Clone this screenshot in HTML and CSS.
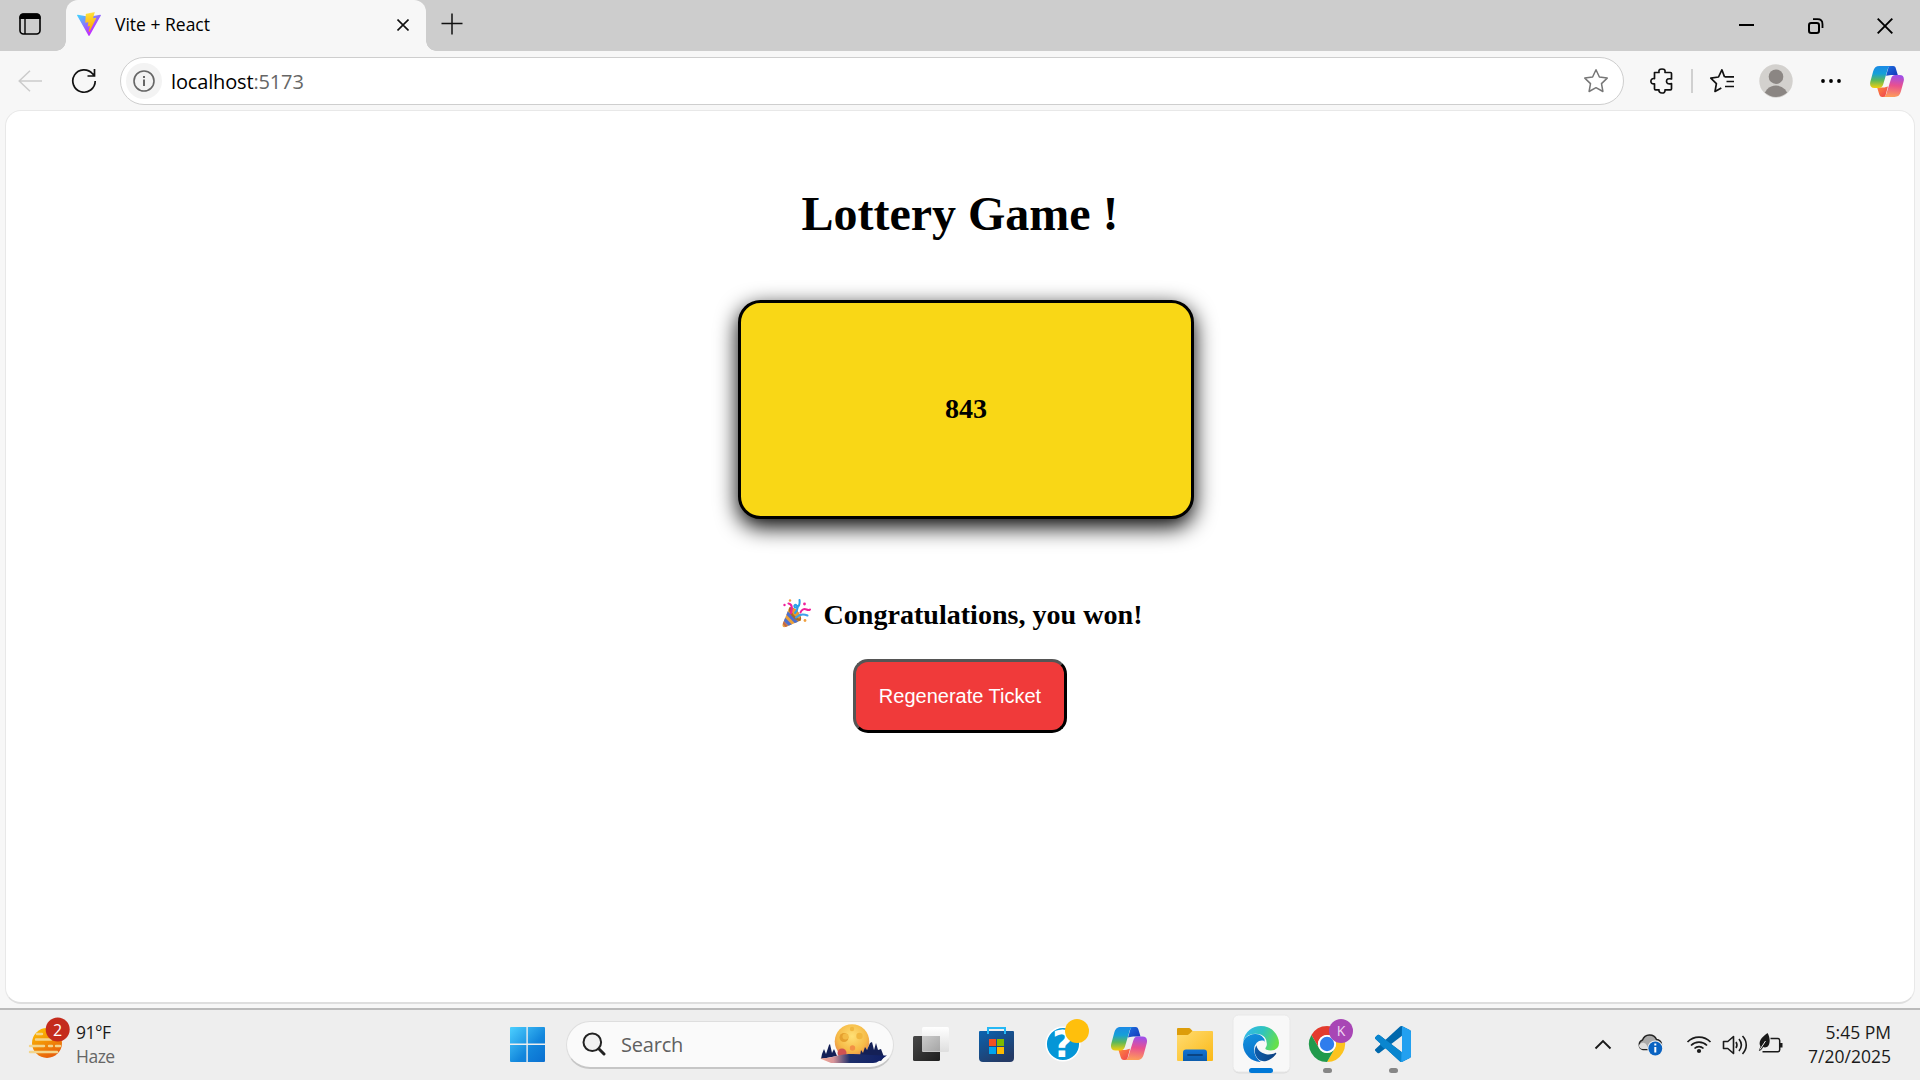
FILE: index.html
```html
<!DOCTYPE html>
<html lang="en">
<head>
<meta charset="utf-8">
<title>Vite + React</title>
<link rel="stylesheet" href="styles.css">
</head>
<body>
<svg class="defs" width="0" height="0" aria-hidden="true">
  <defs>
    <linearGradient id="cpA" x1="0" y1="0" x2="0" y2="1"><stop offset="0" stop-color="#1b8ae6"/><stop offset=".35" stop-color="#15a0d8"/><stop offset=".65" stop-color="#5cb85a"/><stop offset="1" stop-color="#f6cf0c"/></linearGradient>
    <linearGradient id="cpB" x1=".3" y1="0" x2=".2" y2="1"><stop offset="0" stop-color="#a04fe8"/><stop offset=".45" stop-color="#e9508f"/><stop offset="1" stop-color="#ffa257"/></linearGradient>
    <linearGradient id="cpC" x1="0" y1="0" x2="1" y2="1"><stop offset="0" stop-color="#1d6fe0"/><stop offset="1" stop-color="#1436b8"/></linearGradient>
    <linearGradient id="cpD" x1="0" y1="0" x2="1" y2="1"><stop offset="0" stop-color="#ff8a3c"/><stop offset="1" stop-color="#ee3f52"/></linearGradient>
    <symbol id="copilot" viewBox="0 0 36 33">
      <path fill="url(#cpC)" d="M20 0h4.500c2 0 2.500 1.200 3 2.800L29.500 9.500H24c-2.500 0-4 .2-7 1z"/>
      <path fill="url(#cpD)" d="M16 33h-3c-2 0-2.800-1.200-3.300-2.800L7.500 23H12c2.500 0 4-.3 7-1.200z"/>
      <path fill="url(#cpA)" d="M10 0h13c-2.500 0-3.700 1.300-4.300 3.500l-4.700 16c-.9 2.800-2.200 4-4.800 4H4.500C.8 23.500-.6 21 .2 17L3.300 5.500C4.400 1.800 6.200 0 10 0z"/>
      <path fill="url(#cpB)" d="M26.800 9.500h4.700c3.700 0 5.100 2.500 4.300 6.500l-3.100 11.500C31.600 31.200 29.800 33 26 33H13c2.500 0 3.700-1.300 4.300-3.500l5-16c.9-2.800 1.900-4 4.500-4z"/>
    </symbol>
  </defs>
</svg>

<header class="tabstrip">
  <svg class="tab-actions" width="22" height="22" viewBox="0 0 22 22"><rect x="1" y="1" width="20" height="20" rx="3.500" fill="none" stroke="#000" stroke-width="1.600"/><path d="M.5 6V4A3.500 3.500 0 0 1 4 .5h14A3.500 3.500 0 0 1 21.500 4v2z"/><path d="M6 6v15" stroke="#000" stroke-width="1.400"/></svg>
  <div class="tab">
    <svg class="favicon" width="24" height="24" viewBox="0 0 256 257">
      <defs>
        <linearGradient id="v1" x1="-.8%" x2="57.600%" y1="7.700%" y2="78.400%"><stop offset="0" stop-color="#41d1ff"/><stop offset="1" stop-color="#bd34fe"/></linearGradient>
        <linearGradient id="v2" x1="43.400%" x2="50.300%" y1="2.200%" y2="89%"><stop offset="0" stop-color="#ffea83"/><stop offset=".083" stop-color="#ffdd35"/><stop offset="1" stop-color="#ffa800"/></linearGradient>
      </defs>
      <path fill="url(#v1)" d="M255.153 37.938L134.897 252.976c-2.483 4.440-8.862 4.466-11.382.048L.875 37.958c-2.746-4.814 1.371-10.646 6.827-9.670l120.385 21.517a6.537 6.537 0 0 0 2.322-.004l117.867-21.483c5.438-.991 9.574 4.796 6.877 9.620Z"/>
      <path fill="url(#v2)" d="M185.432.063L96.440 17.501a3.268 3.268 0 0 0-2.634 3.014l-5.474 92.456a3.268 3.268 0 0 0 3.997 3.378l24.777-5.718c2.318-.535 4.413 1.507 3.936 3.838l-7.361 36.047c-.495 2.426 1.782 4.500 4.151 3.780l15.304-4.649c2.372-.720 4.652 1.360 4.150 3.788l-11.698 56.621c-.732 3.542 3.979 5.473 5.943 2.437l1.313-2.028l72.516-144.720c1.215-2.423-.880-5.186-3.540-4.672l-25.505 4.922c-2.396.462-4.435-1.770-3.759-4.114l16.646-57.705c.677-2.350-1.370-4.583-3.769-4.113Z"/>
    </svg>
    <span class="tab-title">Vite + React</span>
    <svg class="tab-close" width="12" height="12" viewBox="0 0 12 12"><path d="M.5.5l11 11M11.500.5l-11 11" stroke="#111" stroke-width="1.600"/></svg>
  </div>
  <svg class="new-tab" width="22" height="22" viewBox="0 0 22 22"><path d="M11 .5v21M.5 10.500h21" stroke="#111" stroke-width="1.500"/></svg>
  <div class="window-controls">
    <svg width="16" height="16" viewBox="0 0 16 16"><path d="M0 7h15" stroke="#000" stroke-width="2"/></svg>
    <svg width="16" height="16" viewBox="0 0 16 16"><rect x="1" y="5" width="10" height="10" rx="2.200" fill="none" stroke="#000" stroke-width="2"/><path d="M5 1.200h4.500c3 0 5 2 5 5V10" fill="none" stroke="#000" stroke-width="1.800"/></svg>
    <svg width="16" height="16" viewBox="0 0 16 16"><path d="M.7.7l14.600 14.600M15.300.7L.7 15.300" stroke="#000" stroke-width="1.900"/></svg>
  </div>
</header>

<nav class="toolbar">
  <svg class="back" width="24" height="22" viewBox="0 0 24 22"><path d="M12 .7L1.200 11 12 21.300M1 11h23" fill="none" stroke="#cbcbcb" stroke-width="1.500"/></svg>
  <svg class="reload" width="26" height="26" viewBox="0 0 26 26"><path d="M24.200 13A11.200 11.200 0 1 1 21.500 5.700l2 2.100M23.500 1v7h-7" fill="none" stroke="#111" stroke-width="1.700"/></svg>
  <div class="address">
    <span class="site-info"><svg width="22" height="22" viewBox="0 0 22 22"><circle cx="11" cy="11" r="10" fill="none" stroke="#666" stroke-width="1.600"/><path d="M11 9.500V16M11 6v2" stroke="#666" stroke-width="2"/></svg></span>
    <span class="url">localhost<span class="port">:5173</span></span>
    <svg class="star" width="26" height="26" viewBox="0 0 26 26"><path d="M13 1.800l3.400 7.200 7.800 1.100-5.700 5.500 1.400 7.900L13 19.700l-6.900 3.800 1.400-7.900L1.800 10.100 9.600 9z" fill="none" stroke="#777" stroke-width="1.500" stroke-linejoin="round"/></svg>
  </div>
  <svg class="extensions" width="24" height="26" viewBox="0 0 24 26"><path d="M4.500 4.500H9c-.5-3 .8-3.500 3-3.500s3.500.7 3 3.500h5.500a1 1 0 0 1 1 1V11c-3.500-.7-5 .2-5 2.300s1.500 3 5 2.300v5.200a1 1 0 0 1-1 1H15c.3 2.300-1 3.200-3 3.200s-3.400-1-3-3.200H5.500a1 1 0 0 1-1-1v-5C2 16.200.9 15 .9 13.200s1.300-3 3.600-2.600z" fill="none" stroke="#111" stroke-width="1.700" stroke-linejoin="round"/></svg>
  <span class="divider"></span>
  <svg class="favorites" width="26" height="26" viewBox="0 0 26 26"><path d="M15.500 8.900L12.900 1.800 9.500 9 1.800 10.100l5.600 5.500L6 23.500l6.300-3.600M15.500 8.900H25M17.500 13.500H25M16 18.500h9" fill="none" stroke="#111" stroke-width="1.700" stroke-linejoin="round"/></svg>
  <svg class="avatar" width="34" height="34" viewBox="0 0 34 34"><defs><clipPath id="av"><circle cx="17" cy="17" r="16"/></clipPath></defs><circle cx="17" cy="17" r="16.700" fill="#d3d1ce"/><g clip-path="url(#av)" fill="#8b8683"><circle cx="17" cy="12.700" r="7.300"/><circle cx="17" cy="34" r="12.500"/></g></svg>
  <svg class="more" width="20" height="6" viewBox="0 0 20 6"><circle cx="2" cy="3" r="1.900"/><circle cx="10" cy="3" r="1.900"/><circle cx="18" cy="3" r="1.900"/></svg>
  <svg class="copilot-btn" width="34" height="31"><use href="#copilot"/></svg>
</nav>

<main class="page">
  <h1>Lottery Game !</h1>
  <div class="ticket"><h3>843</h3></div>
  <h3 class="result">
    <svg width="29" height="29" viewBox="0 0 29 29">
      <defs><clipPath id="cone"><path d="M7.500 8C12 10 17 16 19 21.500L3.500 28C1 28.500 0 27.500.7 25z"/></clipPath></defs>
      <path d="M7.500 8C12 10 17 16 19 21.500L3.500 28C1 28.500 0 27.500.7 25z" fill="#eba13a"/>
      <path clip-path="url(#cone)" d="M3 12l13 13M0 18l11 11" stroke="#4b6fd0" stroke-width="3.200"/>
      <path clip-path="url(#cone)" d="M0 22l6 7" stroke="#c1684a" stroke-width="2.500"/>
      <ellipse cx="13" cy="15" rx="3.700" ry="8.600" transform="rotate(-40 13 15)" fill="#a86a28"/>
      <ellipse cx="13.600" cy="14.200" rx="2.500" ry="6.500" transform="rotate(-40 13.600 14.200)" fill="#e99a2e"/>
      <path d="M6.500 4.500c3.500.5 4 4 2.500 9.500" fill="none" stroke="#f0209b" stroke-width="2.200" stroke-linecap="round"/>
      <path d="M17.500 1c.5 4-.5 7.500-3.500 7.500-2.500 0-2-3.500 0-2.500s2.500 4-1 8" fill="none" stroke="#2d9fe6" stroke-width="2" stroke-linecap="round"/>
      <path d="M18.500 13.500c1-3.500 4-4 6-3s3 .5 3.500 0" fill="none" stroke="#f0209b" stroke-width="2" stroke-linecap="round"/>
      <path d="M14 18.500c3-3 7-4 11.500-2" fill="none" stroke="#3fa0ea" stroke-width="2" stroke-linecap="round"/>
      <circle cx="2.500" cy="6" r="1.200" fill="#f0209b"/><circle cx="8" cy="1.500" r="1.200" fill="#f0a040"/><circle cx="22.500" cy="5" r="1.400" fill="#f0209b"/><circle cx="23" cy="21.500" r="1.400" fill="#f0a040"/>
    </svg>
    <span>Congratulations, you won!</span>
  </h3>
  <button class="regenerate">Regenerate Ticket</button>
</main>

<footer class="taskbar">
  <div class="weather">
    <svg width="46" height="70" viewBox="0 0 46 70">
      <defs><linearGradient id="sun" x1="0" y1="0" x2=".5" y2="1"><stop offset="0" stop-color="#ffc800"/><stop offset="1" stop-color="#e8620c"/></linearGradient></defs>
      <circle cx="22" cy="33" r="15" fill="url(#sun)"/>
      <path d="M12 24h5M11 29.500h15M5 36h14M24 36h3M31 36h4M5 42h27" stroke="#f3d58c" stroke-width="2.400" stroke-linecap="round"/>
      <circle cx="32.700" cy="19.500" r="12" fill="#c42b1c"/>
      <text x="32.700" y="25.500" class="badge-text">2</text>
    </svg>
    <div class="weather-text"><span>91°F</span><span class="muted">Haze</span></div>
  </div>

  <svg class="cell" width="66" height="70" viewBox="0 0 66 70">
    <defs><linearGradient id="win" gradientUnits="userSpaceOnUse" x1="16" y1="17" x2="51" y2="52"><stop offset="0" stop-color="#4cd0ff"/><stop offset=".6" stop-color="#1286dc"/><stop offset="1" stop-color="#0a6fd0"/></linearGradient></defs>
    <path fill="url(#win)" d="M17 17h15.400v16.400H16V18a1 1 0 0 1 1-1zM33.800 17H50a1 1 0 0 1 1 1v15.400H33.800zM16 35h16.400v17H17a1 1 0 0 1-1-1zM33.800 35H51v16a1 1 0 0 1-1 1H33.800z"/>
  </svg>

  <div class="search">
    <svg width="24" height="24" viewBox="0 0 24 24"><circle cx="10.300" cy="10.300" r="8.800" fill="#f1f1f1" stroke="#222" stroke-width="2"/><path d="M16.800 16.800L22 22" stroke="#222" stroke-width="3" stroke-linecap="round"/></svg>
    <span>Search</span>
    <svg class="moon" width="68" height="42" viewBox="0 0 68 42">
      <defs>
        <radialGradient id="mn" cx=".5" cy=".35" r=".7"><stop offset="0" stop-color="#ffe176"/><stop offset=".6" stop-color="#f6bb48"/><stop offset="1" stop-color="#e87d48"/></radialGradient>
        <linearGradient id="hill" x1="0" x2="1"><stop offset="0" stop-color="#f7ac94"/><stop offset=".2" stop-color="#d9959a"/><stop offset=".45" stop-color="#1d2f6b"/><stop offset="1" stop-color="#101f66"/></linearGradient>
      </defs>
      <circle cx="32" cy="18.500" r="17.300" fill="url(#mn)"/>
      <circle cx="24" cy="14.500" r="4.500" fill="#e5a02f"/><circle cx="25.500" cy="13.500" r="3" fill="#f4bb45"/><circle cx="39.500" cy="13" r="3.200" fill="#f1b73f"/><circle cx="32" cy="6" r="2.200" fill="#f1b73f"/><circle cx="32.500" cy="25" r="2.700" fill="#f39045"/><circle cx="22" cy="30" r="4.500" fill="#d05252"/>
      <path d="M1 36l1-5 2-5 2 5 3-9 1-1 2 9 2-4 3 7zM40 33l1-6 2 3 2-6 2 3 3-7 2-1 2 8 2-7 2 7 3-1 3 8-3 4z" fill="#142056"/>
      <path d="M0 35.500c10 0 15-3 24-4 14-1.500 28 1.500 43 1l-8 5.500c-2 1.300-3 2-6 2H11z" fill="url(#hill)"/>
    </svg>
  </div>

  <svg class="cell" width="66" height="70" viewBox="0 0 66 70">
    <defs>
      <linearGradient id="tv1" x1="0" y1="0" x2="1" y2="1"><stop offset="0" stop-color="#484848"/><stop offset="1" stop-color="#1e1e1e"/></linearGradient>
      <linearGradient id="tv2" x1="0" y1="0" x2="0" y2="1"><stop offset="0" stop-color="#fff"/><stop offset="1" stop-color="#dedede"/></linearGradient>
      <linearGradient id="tv3" x1="0" y1="0" x2="1" y2="1"><stop offset="0" stop-color="#ccc"/><stop offset="1" stop-color="#a5a5a5"/></linearGradient>
    </defs>
    <rect x="15" y="26" width="27" height="25" rx="1.500" fill="url(#tv1)"/>
    <rect x="24" y="17" width="27" height="25" rx="1.500" fill="url(#tv2)"/>
    <path d="M24 26h18v15.500H25.500a1.500 1.500 0 0 1-1.500-1.500z" fill="url(#tv3)"/>
  </svg>

  <svg class="cell" width="66" height="70" viewBox="0 0 66 70">
    <defs><linearGradient id="st" x1="0" y1="0" x2=".6" y2="1"><stop offset="0" stop-color="#0a63b0"/><stop offset="1" stop-color="#243a66"/></linearGradient></defs>
    <path d="M15 22a1 1 0 0 1 1-1h33a1 1 0 0 1 1 1v26a4 4 0 0 1-4 4H19a4 4 0 0 1-4-4z" fill="url(#st)"/>
    <path d="M24 24v-6h17v6" fill="none" stroke="#25b8f5" stroke-width="2"/>
    <path d="M25 29h7v7h-7z" fill="#f25022"/><path d="M33 29h7v7h-7z" fill="#7fba00"/><path d="M25 37h7v7h-7z" fill="#00a4ef"/><path d="M33 37h7v7h-7z" fill="#ffb900"/>
  </svg>

  <svg class="cell" width="66" height="70" viewBox="0 0 66 70">
    <circle cx="33" cy="34" r="16.800" fill="#0596d7" stroke="#fff" stroke-width="1.500"/>
    <text x="33" y="46.500" class="help-mark">?</text>
    <circle cx="47" cy="21" r="12" fill="#ffbf0c"/>
  </svg>

  <svg class="cell" width="66" height="70" viewBox="0 0 66 70"><use href="#copilot" x="15" y="17" width="36" height="33"/></svg>

  <svg class="cell" width="66" height="70" viewBox="0 0 66 70">
    <defs><linearGradient id="fd" x1="0" y1="0" x2="1" y2="1"><stop offset="0" stop-color="#ffdc72"/><stop offset="1" stop-color="#fbb917"/></linearGradient><linearGradient id="fd2" x1="0" y1="0" x2="0" y2="1"><stop offset="0" stop-color="#1273d4"/><stop offset="1" stop-color="#0d5cab"/></linearGradient></defs>
    <path d="M15 19a1 1 0 0 1 1-1h10.500c1 0 1.500.3 2.200 1l2.300 2.500L28 25H15z" fill="#dd9d0a"/>
    <path d="M15 25h9.500c1.500 0 2-.3 3-1.200L29.300 22c.7-.6 1-1 2-1H50a1 1 0 0 1 1 1v28a1 1 0 0 1-1 1H16a1 1 0 0 1-1-1z" fill="url(#fd)"/>
    <path d="M21 51v-8.500a3 3 0 0 1 3-3h18a3 3 0 0 1 3 3V51z" fill="url(#fd2)"/><path d="M26 45h14" stroke="#0a4483" stroke-width="1.800" stroke-linecap="round"/>
  </svg>

  <svg class="cell" width="66" height="70" viewBox="0 0 66 70">
    <defs>
      <linearGradient id="eg1" x1="0" y1=".2" x2="1" y2=".5"><stop offset="0" stop-color="#35b7ee"/><stop offset=".5" stop-color="#2fc3c0"/><stop offset="1" stop-color="#66e04a"/></linearGradient>
      <linearGradient id="eg2" x1="0" y1="0" x2=".3" y2="1"><stop offset="0" stop-color="#1494df"/><stop offset="1" stop-color="#0a6fc9"/></linearGradient>
      <linearGradient id="eg3" x1="0" y1="0" x2="1" y2="0"><stop offset="0" stop-color="#0f5cab"/><stop offset="1" stop-color="#0d4180"/></linearGradient>
    </defs>
    <rect x="5" y="5.500" width="57" height="58" rx="6" fill="#dcdcdc"/><rect x="5" y="5" width="57" height="57" rx="5.500" fill="#f8f8f8" stroke="#e8e8e8"/>
    <g transform="translate(15 16) scale(1.500)">
      <path fill="url(#eg3)" d="M21.860 17.860q.14 0 .250.120.100.130.100.250t-.110.330l-.320.460-.430.530-.440.500q-.260.260-.420.420l-.240.220q-.580.530-1.340 1.040-.760.510-1.600.910-.860.400-1.740.640t-1.670.240q-.900 0-1.690-.280-.800-.280-1.480-.780-.680-.500-1.220-1.170-.530-.660-.920-1.440-.380-.770-.580-1.600-.200-.830-.200-1.670 0-1 .320-1.960.330-.970.870-1.800.140.950.550 1.770.410.820 1.020 1.500.600.680 1.380 1.210.780.540 1.640.900.860.360 1.770.560.920.200 1.800.200 1.120 0 2.180-.240 1.060-.230 2.060-.720l.200-.100.200-.050z"/>
      <path fill="url(#eg2)" d="M11.780 23.900q-.220.100-.420.100-2.100-.100-4.050-.950-1.960-.860-3.470-2.300Q1.900 19 1 16.900.1 14.700 0 12.300 0 9.900 1.100 8.600q1.300-1.600 3.400-2.500 1.900-.8 4-.7 2.300.1 4 1.300 2 1.500 2 3.900-.300-.7-1.100-.900-2.500-.4-4.300 1.400-1.700 1.800-1.700 4.300.000 4.200 2.500 6.700.9 1 1.880 1.800z"/>
      <path fill="url(#eg1)" d="M12 0q2.340 0 4.500.84 2.300.9 4 2.600 1.600 1.600 2.500 3.700 1 2.200 1 4.200 0 2-1.200 3.300-1.700 1.700-4.300 1.700-1.500 0-2.800-.5-.8-.4-.8-.9 0-.4.400-.8.700-1 .6-2.300 0-2.300-1.300-4.100Q12.700 5.300 8.400 5.200q-4 0-6.600 2.400-1 .9-1.700 2.600Q.9 5.300 4.300 2.600 7.600 0 12 0z"/>
    </g>
    <rect x="21" y="58" width="24" height="5" rx="2.500" fill="#0078d7"/>
  </svg>

  <svg class="cell" width="66" height="70" viewBox="0 0 66 70">
    <g transform="translate(33 34)">
      <path d="M0-9H15.600A18 18 0 0 0-15.600-9L-7.800 4.500A9 9 0 0 1 0-9z" fill="#e33b2e"/>
      <path d="M7.800 4.500L0 18A18 18 0 0 0 15.600-9H0A9 9 0 0 1 7.800 4.500z" fill="#fcc31e"/>
      <path d="M-7.800 4.500L-15.600-9A18 18 0 0 0 0 18L7.800 4.500A9 9 0 0 1-7.800 4.500z" fill="#219a4c"/>
      <circle r="9" fill="#fff"/><circle r="7.200" fill="#2f7ded"/>
    </g>
    <circle cx="47" cy="21" r="12" fill="#a846b5"/>
    <text x="47" y="26" class="profile-letter">K</text>
    <rect x="29" y="58" width="9" height="5" rx="2.500" fill="#868686"/>
  </svg>

  <svg class="cell" width="66" height="70" viewBox="0 0 66 70">
    <defs><clipPath id="vs"><path d="M23.150 2.587L18.210.210a1.494 1.494 0 0 0-1.705.290l-9.460 8.630-4.120-3.128a.999.999 0 0 0-1.276.057L.327 7.261A1 1 0 0 0 .326 8.740L3.899 12 .326 15.260a1 1 0 0 0 .001 1.479L1.650 17.940a.999.999 0 0 0 1.276.057l4.120-3.128 9.460 8.630a1.492 1.492 0 0 0 1.704.290l4.942-2.377A1.500 1.500 0 0 0 24 20.060V3.939a1.500 1.500 0 0 0-.850-1.352zm-5.146 14.861L10.826 12l7.178-5.448v10.896z" clip-rule="evenodd"/></clipPath></defs>
    <g transform="translate(15 16) scale(1.500)"><g clip-path="url(#vs)"><path d="M0 0h24v24H0z" fill="#0068ac"/><path d="M0 5h3l4 4.100L18 17.500V24h-2L0 9.500z" fill="#0a86cf"/><path d="M18 0h6v24h-6.500z" fill="#22a0f0"/></g></g>
    <rect x="29" y="58" width="9" height="5" rx="2.500" fill="#868686"/>
  </svg>

  <div class="tray">
    <svg class="chevron" width="18" height="12" viewBox="0 0 18 12"><path d="M1.500 9.500L9 2l7.500 7.500" fill="none" stroke="#1a1a1a" stroke-width="1.900"/></svg>
    <svg class="cloud" width="26" height="24" viewBox="0 0 26 24"><path d="M6 16.500a5 5 0 0 1-.5-9.500A7.500 7.500 0 0 1 19.500 6.500a5 5 0 0 1 0 10z" fill="#a9a9a9" stroke="#222" stroke-width="1.500"/><path d="M2 12c3-4 8-3 9 4H6c-3 0-4.300-2-4-4z" fill="#ddd"/><circle cx="18.300" cy="15.500" r="8" fill="#eee"/><circle cx="18.300" cy="15.500" r="6.900" fill="#0a63c2"/><path d="M18.300 14v5.500M18.300 10.500v2" stroke="#fff" stroke-width="2"/></svg>
    <svg class="wifi" width="26" height="20" viewBox="0 0 26 20"><g fill="none" stroke="#1a1a1a" stroke-width="1.700"><path d="M1.500 7a16 16 0 0 1 23 0M5 10.500a11.300 11.300 0 0 1 16 0M8.500 13.500a6.500 6.500 0 0 1 9 0"/></g><circle cx="13" cy="16" r="2.100" fill="#1a1a1a"/></svg>
    <svg class="volume" width="26" height="22" viewBox="0 0 26 22"><g fill="none" stroke="#1a1a1a" stroke-width="1.600" stroke-linejoin="round"><path d="M1.500 7.500v7h4.300l5.700 5V2.500l-5.700 5zM14 8c1.300 2 1.300 4 0 6M17 5c3 3.800 3 8.200 0 12M20.500 2c5 5.500 5 12.500 0 18"/></g></svg>
    <svg class="battery" width="26" height="22" viewBox="0 0 26 22"><path d="M12.500 5.500h7.200a2 2 0 0 1 2 2v9.300a2 2 0 0 1-2 2H4.500" fill="none" stroke="#1a1a1a" stroke-width="1.500"/><path d="M22 10h2.500v4.500H22z" fill="#1a1a1a"/><path d="M9.500 0c2.500 4 3 9.500 1 12.500-1.500 2.200-4 2.200-5.300 1.500C3 18 1.500 18 .8 17.500l1.700-4C0 9 3 4.500 9.500 0z" fill="#1a1a1a"/><path d="M2 16.500L7.500 8" stroke="#eee" stroke-width="1"/></svg>
    <div class="clock"><span>5:45 PM</span><span>7/20/2025</span></div>
  </div>
</footer>
</body>
</html>
```

FILE: styles.css
```css
* { box-sizing: border-box; }

body {
  margin: 0;
  width: 1920px;
  height: 1080px;
  overflow: hidden;
  display: flex;
  flex-direction: column;
  background: #f7f7f7;
  font-family: "Open Sans", "Noto Sans", sans-serif;
  color: #1a1a1a;
}

svg { display: block; flex: none; }
.defs { position: absolute; }

/* Tab strip */
.tabstrip {
  height: 51px;
  flex: none;
  display: flex;
  align-items: flex-start;
  background: #cdcdcd;
}
.tab-actions { margin: 13px 25px 0 19px; }
.tab {
  position: relative;
  width: 360px;
  height: 51px;
  display: flex;
  padding: 0 17px 0 11px;
  background: #f7f7f7;
  border-radius: 12px 12px 0 0;
}
.tab::before,
.tab::after {
  content: "";
  position: absolute;
  bottom: 0;
  width: 10px;
  height: 10px;
}
.tab::before { left: -10px; background: radial-gradient(circle at 0 0, #cdcdcd 9.500px, #f7f7f7 10px); }
.tab::after { right: -10px; background: radial-gradient(circle at 100% 0, #cdcdcd 9.500px, #f7f7f7 10px); }
.favicon { margin: 12px 14px 0 0; }
.tab-title {
  flex: 1;
  margin-top: 12px;
  font-size: 17.500px;
  line-height: 24px;
  color: #000;
}
.tab-close { margin-top: 19px; }
.new-tab { margin: 13px 0 0 15px; }
.window-controls {
  display: flex;
  gap: 53px;
  margin: 17.500px 27px 0 auto;
}

/* Toolbar */
.toolbar {
  height: 59px;
  flex: none;
  display: flex;
  align-items: center;
  padding: 1px 16px 0 18px;
}
.reload { margin: 0 23px 0 29px; }
.address {
  width: 1504px;
  height: 48px;
  display: flex;
  align-items: center;
  padding: 0 14px 0 5px;
  background: #fff;
  border: 1.500px solid #cecece;
  border-radius: 24px;
}
.site-info {
  width: 36px;
  height: 36px;
  display: flex;
  align-items: center;
  justify-content: center;
  border-radius: 50%;
  background: #f3f3f3;
}
.url { flex: 1; margin-left: 9px; font-size: 20px; letter-spacing: -0.150px; color: #000; }
.port { color: #666; }
.extensions { margin-left: 26px; }
.divider { width: 2px; height: 24px; margin: 0 16px 0 17px; background: #d0d0d0; }
.avatar { margin: 0 28px 0 24px; }
.copilot-btn { margin-left: auto; }

/* Page */
.page {
  height: 894px;
  flex: none;
  margin: 0 5px;
  padding-top: 75px;
  display: flex;
  flex-direction: column;
  align-items: center;
  background: #fff;
  border: 1px solid #e8e8e8;
  border-bottom: 2px solid #dedede;
  border-radius: 16px;
  font-family: "Liberation Serif", "Times New Roman", serif;
  color: #000;
}
h1, h3 { margin: 0; font-weight: bold; }
h1 { font-size: 48px; line-height: 55px; }
h3 { font-size: 28.080px; line-height: 32px; }
.ticket {
  width: 456px;
  height: 219px;
  margin: 59px 0 0 12px;
  padding-bottom: 1px;
  display: flex;
  align-items: center;
  justify-content: center;
  background: #f9d716;
  border: 3px solid #000;
  border-radius: 22.500px;
  box-shadow: 0 7.500px 22.500px #000;
}
.result {
  margin: 80px 0 0 5px;
  display: flex;
  gap: 12px;
}
.regenerate {
  width: 214px;
  height: 74px;
  margin-top: 28px;
  padding: 0;
  font: 20px "Liberation Sans", Arial, sans-serif;
  color: #fff;
  background: #f03a3a;
  border: 3px solid;
  border-color: #555 #000 #000 #555;
  border-radius: 15px;
}

/* Taskbar */
.taskbar {
  height: 72px;
  flex: none;
  margin-top: auto;
  display: flex;
  align-items: center;
  background: #eee;
  border-top: 2px solid #bbb;
}
.weather { width: 494px; display: flex; align-items: center; padding-left: 25px; }
.weather-text { margin-left: 5px; letter-spacing: -0.500px; }
.weather-text, .clock { display: flex; flex-direction: column; padding-bottom: 3px; font-size: 17.500px; line-height: 24px; }
.muted { color: #666; }
.badge-text { font-size: 16px; fill: #fff; text-anchor: middle; }
.help-mark { font: bold 37px "DejaVu Sans", sans-serif; fill: #fff; text-anchor: middle; }
.profile-letter { font-size: 14px; fill: #f0d8f2; text-anchor: middle; }
.search {
  width: 328px;
  height: 48px;
  margin: 0 4px 1px 6px;
  display: flex;
  align-items: center;
  padding: 0 5px 0 15px;
  background: #fafafa;
  border: 1.500px solid #dedede;
  border-bottom: 2px solid #c6c6c6;
  border-radius: 24px;
  font-size: 20px;
  letter-spacing: -0.200px;
  color: #606060;
}
.search span { margin: 0 auto 0 15px; }
.tray { display: flex; align-items: center; margin-left: auto; padding-right: 29px; }
.chevron { margin-bottom: 1px; }
.cloud { margin-left: 25px; }
.wifi { margin-left: 23px; }
.volume { margin: 0 0 1px 10px; }
.battery { margin: 0 0 3px 10px; }
.clock { width: 107px; align-items: flex-end; }
```
